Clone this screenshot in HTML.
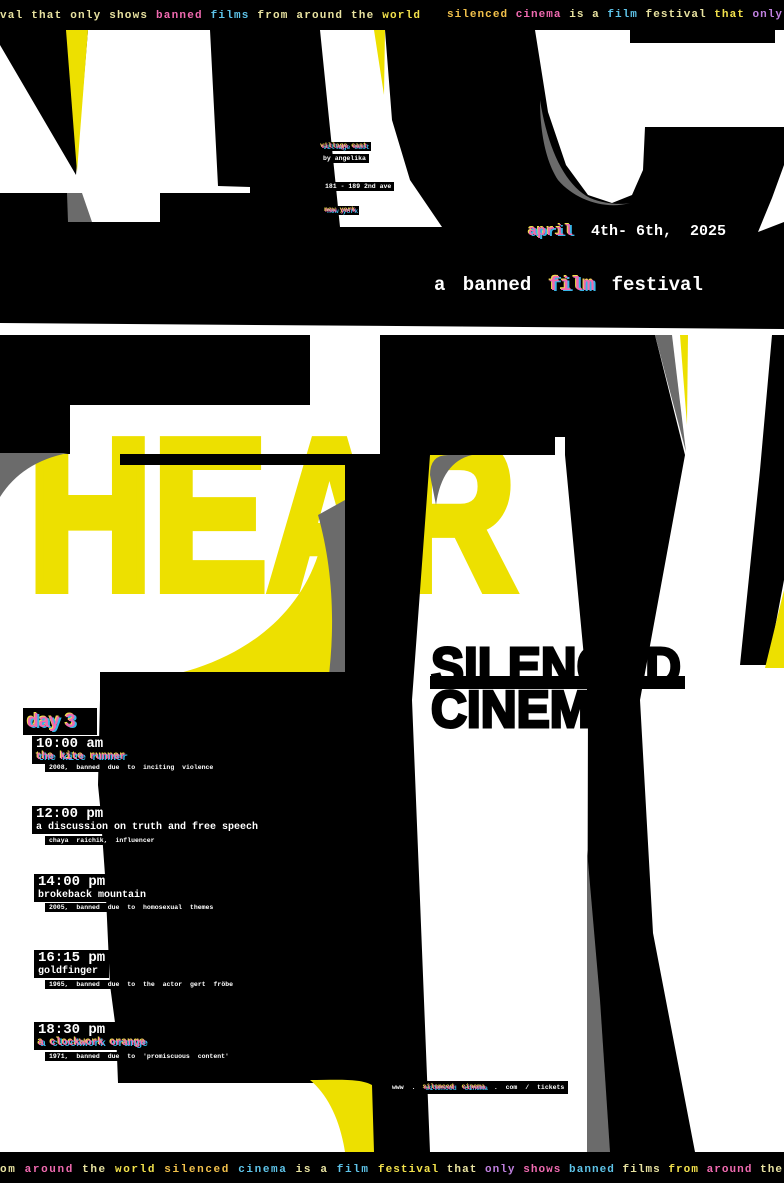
<!DOCTYPE html>
<html><head><meta charset="utf-8"><style>
html,body{margin:0;padding:0;background:#fff;}
#p{position:relative;width:784px;height:1183px;overflow:hidden;background:#fff;}
svg{position:absolute;left:0;top:0;}
.b{position:absolute;background:#000;color:#fff;font-family:"Liberation Mono",monospace;font-weight:bold;white-space:nowrap;}
.g{color:#f06ab0;text-shadow:2px 1px 0 #38b6e8,-1px -1px 0 #f2e14b;}
.t{font-size:14px;line-height:15px;padding:1px 4px 0 4px;}
.n{font-size:10px;line-height:12px;padding:0 4px;}
.s{font-size:6.5px;line-height:9px;padding:0 4px 0 4px;word-spacing:4px;}
.i{font-size:6.5px;line-height:9px;padding:0 3px;}
</style></head><body><div id="p">
<svg width="784" height="1183" viewBox="0 0 784 1183">
<rect x="0" y="0" width="784" height="330" fill="#000"/>
<polygon points="0,45 76,175 88,30 210,30 218,186 250,187 250,193 160,193 160,222 82,222 70,193 0,193" fill="#fff"/>
<polygon points="66,30 88,30 77,172" fill="#ede000"/>
<polygon points="67,193 82,193 92,222 68,222" fill="#6b6b6b"/>
<polygon points="320,30 385,30 392,120 410,180 442,227 340,227" fill="#fff"/>
<polygon points="374,30 385,30 384,95" fill="#ede000"/>
<polygon points="535,30 630,30 630,43 775,43 775,30 784,30 784,127 645,127 643,170 632,195 612,203 588,195 566,165 548,112" fill="#fff"/>
<path d="M540,100 C548,150 565,185 590,198 C605,204 620,205 630,203 C605,210 575,200 558,180 C545,160 540,130 540,100 Z" fill="#6b6b6b"/>
<polygon points="784,165 784,222 758,232 772,198" fill="#fff"/>
<polygon points="0,323 784,329 784,336 0,331" fill="#fff"/>
<text x="28" y="589" font-family="Liberation Sans, sans-serif" font-weight="bold" font-size="215" textLength="488" lengthAdjust="spacingAndGlyphs" fill="#ede000" stroke="#ede000" stroke-width="10" stroke-linejoin="miter">HEAR</text>
<rect x="0" y="335" width="310" height="70" fill="#000"/>
<rect x="0" y="404" width="70" height="50" fill="#000"/>
<path d="M0,453 L68,453 Q22,462 0,497 Z" fill="#6b6b6b"/>
<path d="M100,683 C200,683 290,640 318,555 L345,555 L345,683 Z" fill="#ede000"/>
<path d="M318,515 L345,500 L345,683 L328,683 C336,620 332,565 318,515 Z" fill="#6b6b6b"/>
<rect x="120" y="454" width="270" height="11" fill="#000"/>
<polygon points="380,335 655,335 685,455 565,455 565,437 555,437 555,455 380,455" fill="#000"/>
<polygon points="655,335 672,335 686,452" fill="#6b6b6b"/>
<polygon points="680,335 688,335 687,425" fill="#ede000"/>
<polygon points="345,455 430,455 412,700 420,900 430,1152 372,1152 362,1083 118,1083 116,1030 110,985 105,875 100,805 98,785 100,700 100,672 345,672" fill="#000"/>
<path d="M430,475 Q430,455 448,455 L472,455 Q442,462 436,505 Z" fill="#6b6b6b"/>
<path d="M310,1080 C335,1080 360,1078 372,1085 L374,1152 L345,1152 C340,1120 328,1095 310,1080 Z" fill="#ede000"/>
<polygon points="565,455 685,455 640,700 653,933 695,1152 587,1152 588,700" fill="#000"/>
<polygon points="587,850 600,1000 610,1152 587,1152" fill="#6b6b6b"/>
<polygon points="772,335 784,335 784,580 768,665 740,665 760,470" fill="#000"/>
<polygon points="784,590 784,668 765,668" fill="#ede000"/>
<text x="431" y="685" font-family="Liberation Sans, sans-serif" font-weight="bold" font-size="54" textLength="250" lengthAdjust="spacingAndGlyphs" fill="#000" stroke="#000" stroke-width="3">SILENCED</text>
<rect x="430" y="676" width="255" height="13" fill="#000"/>
<text x="431" y="727" font-family="Liberation Sans, sans-serif" font-weight="bold" font-size="52" textLength="196" lengthAdjust="spacingAndGlyphs" fill="#000" stroke="#000" stroke-width="3">CINEMA</text>
<rect x="0" y="1152" width="784" height="31" fill="#000"/>
<g font-family="Liberation Mono, monospace" font-weight="bold" font-size="11" fill="#e8e2a0">
<text x="0" y="18" textLength="420" lengthAdjust="spacing">val that only shows <tspan fill="#f06ab0">banned</tspan> <tspan fill="#5ec3e8">films</tspan> from around the <tspan fill="#f2e14b">world</tspan></text>
<text x="447" y="17" textLength="335" lengthAdjust="spacing"><tspan fill="#f2c14b">silenced</tspan> <tspan fill="#f06ab0">cinema</tspan> is a <tspan fill="#5ec3e8">film</tspan> festival <tspan fill="#f2e14b">that</tspan> <tspan fill="#c080e0">only</tspan></text>
<text x="0" y="1172" textLength="368" lengthAdjust="spacing">om <tspan fill="#f06ab0">around</tspan> the <tspan fill="#f2e14b">world</tspan>  <tspan fill="#f2c14b">silenced</tspan> <tspan fill="#5ec3e8">cinema</tspan> is a <tspan fill="#5ec3e8">film</tspan></text>
<text x="378" y="1172" textLength="404" lengthAdjust="spacing"><tspan fill="#f2e14b">festival</tspan> that <tspan fill="#c080e0">only</tspan> <tspan fill="#f06ab0">shows</tspan> <tspan fill="#5ec3e8">banned</tspan> films <tspan fill="#f2e14b">from</tspan> <tspan fill="#f06ab0">around</tspan> the</text>
</g>
</svg>

<div class="b i g" style="left:318px;top:142px;">village east</div>
<div class="b i" style="left:320px;top:154px;">by angelika</div>
<div class="b i" style="left:322px;top:182px;">181 - 189 2nd ave</div>
<div class="b i g" style="left:322px;top:206px;">new york</div>
<div class="b" style="left:528px;top:222px;font-size:15px;line-height:20px;background:none;"><span class="g">april</span>&nbsp; 4th- 6th,&nbsp; 2025</div>
<div class="b" style="left:434px;top:273px;font-size:19px;line-height:24px;background:none;word-spacing:6px;">a banned <span class="g">film</span> festival</div>

<div class="b g" style="left:23px;top:708px;width:70px;height:27px;font-size:19px;line-height:27px;padding-left:4px;font-family:'Liberation Sans',sans-serif;">day 3</div>

<div class="b" style="left:32px;top:736px;"><div class="t">10:00 am</div><div class="n g">the kite runner</div></div>
<div class="b s" style="left:45px;top:763px;">2008, banned due to inciting violence</div>

<div class="b" style="left:32px;top:806px;"><div class="t">12:00 pm</div><div class="n">a discussion on truth and free speech</div></div>
<div class="b s" style="left:45px;top:836px;">chaya raichik, influencer</div>

<div class="b" style="left:34px;top:874px;"><div class="t">14:00 pm</div><div class="n">brokeback mountain</div></div>
<div class="b s" style="left:45px;top:903px;">2005, banned due to homosexual themes</div>

<div class="b" style="left:34px;top:950px;"><div class="t">16:15 pm</div><div class="n">goldfinger</div></div>
<div class="b s" style="left:45px;top:980px;">1965, banned due to the actor gert fröbe</div>

<div class="b" style="left:34px;top:1022px;"><div class="t">18:30 pm</div><div class="n g">a clockwork orange</div></div>
<div class="b s" style="left:45px;top:1052px;">1971, banned due to 'promiscuous content'</div>

<div class="b s" style="left:388px;top:1081px;padding:2px 4px;">www . <span class="g">silenced cinema</span> . com / tickets</div>
</div></body></html>
